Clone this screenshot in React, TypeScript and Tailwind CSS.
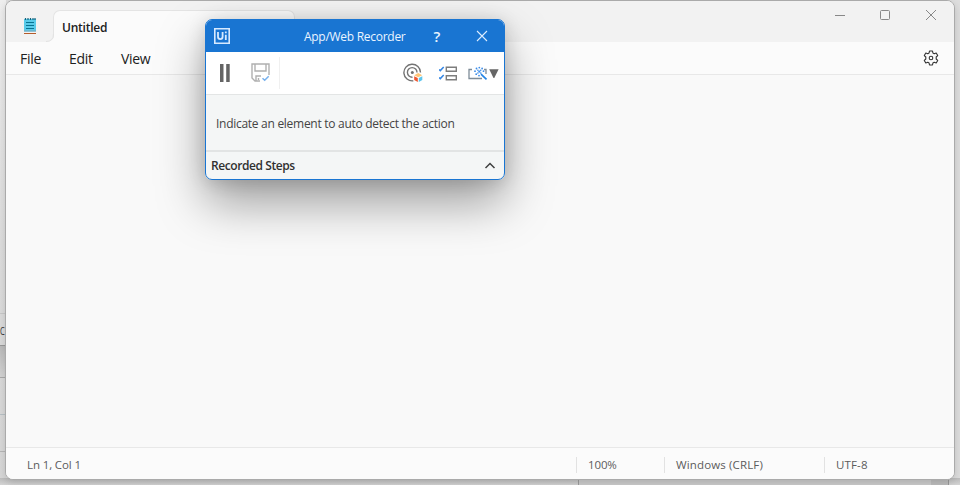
import React from "react";

function NotepadIcon() {
  return (
    <svg width="14" height="18" viewBox="0 0 14 18">
      <path d="M1 2h12v12H1z" fill="#58cbea" />
      <path d="M1 13.2h12v1.5H1z" fill="#71b2c8" />
      <path d="M1 16.5h12" stroke="#b45c2c" strokeWidth="1" />
      <path d="M2.5 1v2M5 1v2M7.5 1v2M10 1v2M12 1v2" stroke="#14647e" strokeWidth="1.2" />
      <path d="M3 5.5h8M3 8.5h8M3 11.5h8" stroke="#087493" />
    </svg>
  );
}

function GearIcon() {
  return (
    <svg width="16" height="16" viewBox="0 0 16 16" fill="none" stroke="#333" strokeWidth="1.1" strokeLinejoin="round">
      <path d="m6.5 1h3l.4 2 1.3.7 2-.7 1.5 2.6L13.2 7v2l1.5 1.4-1.5 2.6-2-.7-1.3.7-.4 2h-3l-.4-2-1.3-.7-2 .7-1.5-2.6L2.8 9V7L1.3 5.6 2.8 3l2 .7L6.1 3z" />
      <circle cx="8" cy="8" r="1.8" />
    </svg>
  );
}

function SaveIcon() {
  return (
    <svg width="19" height="20" viewBox="0 0 19 20" fill="none" stroke="#b0b0b0" strokeWidth="1.4">
      <path d="M9 18H4l-3-3V1h17v11M4 1v7h11V1M5 18v-5h5M7.5 17v-2" />
      <path d="m11.5 15.2 2.2 2 4-4" stroke="#76b0ed" strokeWidth="1.5" />
    </svg>
  );
}

function TargetIcon() {
  return (
    <svg width="20" height="20" viewBox="0 0 20 20" fill="none" stroke="#747474" strokeWidth="1.4">
      <path d="M10.3 17.8A8.3 8.3 0 1 1 17.5 9.5M9.5 14.2A4.8 4.8 0 1 1 14 9.5" />
      <circle cx="9.3" cy="9.5" r="1.5" fill="#707070" stroke="none" />
      <g stroke="none">
        <path d="m11.2 12.3 4-2.3 4 2.3-4 2z" fill="#ffc576" />
        <path d="m11.2 13.3 3.6 1.6v4l-3.6-1.9z" fill="#ee5730" />
        <path d="m19.3 13.3-3.5 1.6v4l3.5-1.9z" fill="#5cc5ee" />
      </g>
    </svg>
  );
}

function StepsIcon() {
  return (
    <svg width="18" height="15" viewBox="0 0 18 15" fill="none">
      <path d="M7.3 1.3h10v4h-10zM7.3 9.7h10v4h-10z" stroke="#7d7d7d" strokeWidth="1.4" />
      <path d="m0 3.5 1.3 1.1L4.7 1M0 11.5l1.3 1.1L4.7 9" stroke="#3486e4" strokeWidth="1.5" />
    </svg>
  );
}

function WandIcon() {
  return (
    <svg width="31" height="15" viewBox="0 0 31 15" fill="none">
      <path d="M4 3.5H1v9h13M16 3.5h2V8" stroke="#7e8c98" strokeWidth="1.3" />
      <path d="m13 8.2 5.5 5.2" stroke="#2384e5" strokeWidth="1.7" />
      <g fill="#3d8ee9">
        <circle cx="11.3" cy="1.6" r=".9" /><circle cx="8.5" cy="2.5" r=".9" />
        <circle cx="14.1" cy="2.5" r=".9" /><circle cx="7" cy="5.2" r=".9" />
        <circle cx="15.5" cy="5.2" r=".9" /><circle cx="8.2" cy="8.2" r=".9" />
        <circle cx="11" cy="9.6" r=".9" /><circle cx="11.3" cy="5.6" r="1.1" />
        <circle cx="9.9" cy="4.2" r=".8" /><circle cx="12.7" cy="4.2" r=".8" />
        <circle cx="9.9" cy="7" r=".8" /><circle cx="12.8" cy="7.1" r=".8" />
      </g>
      <path d="M21.2 3.3h9.4l-4.3 8.6h-.8z" fill="#666" />
    </svg>
  );
}

function Recorder() {
  return (
    <section className="absolute left-[205px] top-[19px] flex h-[161px] w-[300px] flex-col overflow-hidden rounded-[7px] border border-[#1975d2] bg-[#f4f6f6] text-[#444]">
      <header className="flex h-8 shrink-0 items-center bg-[#1975d2] text-[#eaf4ff]">
        <svg className="ml-2 mr-[74px] shrink-0" width="16" height="16" viewBox="0 0 16 16" fill="none" stroke="#d7eaff" strokeWidth="1.6">
          <path d="M.8.8h14.4v14.4H.8z" />
          <path d="M4 4v4.8a2.3 2.3 0 0 0 4.6 0V4M11.8 6.7V12M11.8 3.5v1.8" strokeWidth="1.8" />
        </svg>
        <h1 className="w-[102px] whitespace-nowrap pt-[2px] text-[12px] font-normal tracking-[-0.28px]">App/Web Recorder</h1>
        <span className="ml-[25px] w-3 text-center text-[15px] font-semibold">?</span>
        <svg className="ml-[33px]" width="12" height="12" viewBox="0 0 12 12" stroke="#dcecff" strokeWidth="1.1"><path d="m1 1 10 10M11 1 1 11" /></svg>
      </header>
      <div className="flex h-[43px] shrink-0 items-center border-b border-[#e3e5e5] bg-white">
        <svg className="ml-[14px] mr-[21px]" width="10" height="18" viewBox="0 0 10 18" fill="#646464"><path d="M0 0h3.5v18H0zM6.2 0h3.5v18H6.2z" /></svg>
        <SaveIcon />
        <div className="ml-[9px] h-8 border-l border-[#f0f0f0]" />
        <div className="ml-[123px]"><TargetIcon /></div>
        <div className="ml-[16px]"><StepsIcon /></div>
        <div className="ml-[11px]"><WandIcon /></div>
      </div>
      <div className="flex h-[57px] shrink-0 items-center whitespace-nowrap border-b-2 border-[#e2e4e4] pl-[10px] pt-[2px] text-[12px] tracking-[-0.28px]">Indicate an element to auto detect the action</div>
      <div className="flex grow items-center justify-between pl-[5px] pr-2">
        <strong className="text-[12px] font-semibold tracking-[-0.42px] text-[#303030]">Recorded Steps</strong>
        <svg width="12" height="8" viewBox="0 0 12 8" fill="none" stroke="#404040" strokeWidth="1.5"><path d="m1.5 6 4.5-4.5L10.5 6" /></svg>
      </div>
    </section>
  );
}

export default function App() {
  return (
    <main className="relative h-[485px] w-[960px] overflow-hidden bg-[#dedede] font-['Open_Sans','Noto_Sans',sans-serif]">
      <div className="absolute left-0 top-0 h-[485px] w-[6px] bg-linear-to-b from-[#efefef] via-[#dedede] to-[#d8d8d8]">
        <div className="h-[314px] border-b border-[#c9c9c9]" />
        <div className="h-8 border-b border-[#999] pt-[10px] text-[10px] leading-[15px] text-[#333]"><span className="block w-[7px] origin-left scale-x-75">C</span></div>
        <div className="h-8 border-b border-[#aaa] bg-linear-to-b from-[#bbb] to-[#d5d5d5]" />
        <div className="h-[37px] border-b border-[#b8c1c6]" />
        <div className="h-[37px] border-b border-[#b7b7b7]" />
      </div>
      <div className="absolute bottom-0 left-0 flex h-[7px] w-full bg-linear-to-b from-[#bebebe] to-[#d5d5d5]">
        <div className="w-[579px] border-r border-[#9d9d9d]" /><div className="w-[352px] bg-[#cdcdcd]" /><div className="w-[18px] border-r border-[#999] bg-[#bebebe]" />
      </div>
      <div className="relative ml-[5px] flex h-[480px] w-[950px] flex-col overflow-hidden rounded-[8px] border border-[#aaa] bg-[#f9f9f9] text-[#202020] shadow-[0_3px_8px_rgba(0,0,0,0.15)]">
        <header className="flex h-[41px] shrink-0 bg-[#f2f2f2]">
          <div className="flex w-[47px] items-center justify-center pl-px pt-[9px]"><NotepadIcon /></div>
          <div className="relative mt-[9px] h-8 w-[242px] rounded-t-[7px] border border-b-0 border-[#e4e4e4] bg-[#fbfbfb]">
            <svg className="absolute -left-[8px] bottom-0" width="8" height="8" viewBox="0 0 8 8" fill="none"><path d="M8 0Q8 8 0 8H8z" fill="#fbfbfb" /><path d="M7.5 0Q7.5 7.5 0 7.5" stroke="#e2e2e2" /></svg>
            <span className="block pl-[8px] pt-[8px] text-[12px] font-semibold leading-[18px] tracking-[-0.23px]">Untitled</span>
          </div>
          <div className="ml-auto flex items-start pt-[8px] text-[#888]">
            <svg className="mr-[35px]" width="10" height="12" viewBox="0 0 10 12"><path d="M0 6.5h10" stroke="currentColor" /></svg>
            <svg className="mr-[36px]" width="10" height="11" viewBox="0 0 10 11" fill="none"><rect x=".5" y="1.5" width="9" height="9" rx="1" stroke="currentColor" /></svg>
            <svg className="mr-[18px]" width="10" height="11" viewBox="0 0 10 11"><path d="m0 1 10 10M10 1 0 11" stroke="currentColor" /></svg>
          </div>
        </header>
        <nav className="flex h-[33px] shrink-0 items-center border-b border-[#e8e8e8] bg-[#fbfbfb] pl-[14px] pr-[15px] text-[14px] tracking-[-0.3px]">
          <span className="w-[49px]">File</span><span className="w-[52px]">Edit</span><span>View</span>
          <span className="ml-auto"><GearIcon /></span>
        </nav>
        <div className="grow" />
        <footer className="flex h-8 shrink-0 items-center border-t border-[#e8e8e8] bg-[#fbfbfb] pt-[2px] text-[11.5px] text-[#5c5c5c]">
          <span className="w-[570px] pl-[21px] tracking-[-0.12px]">Ln 1, Col 1</span>
          <span className="flex h-4 w-[88px] items-center border-l border-[#e2e2e2] pl-[11px] tracking-[-0.12px]">100%</span>
          <span className="flex h-4 w-[160px] items-center border-l border-[#e2e2e2] pl-[11px] tracking-[0.14px]">Windows (CRLF)</span>
          <span className="flex h-4 items-center border-l border-[#e2e2e2] pl-[11px] tracking-[0.15px]">UTF-8</span>
        </footer>
        <div className="pointer-events-none absolute left-[199px] top-[18px] h-[161px] w-[300px] rounded-[7px] shadow-[0_23px_48px_rgba(0,0,0,0.37),0_2px_18px_rgba(0,0,0,0.14)]" />
      </div>
      <Recorder />
    </main>
  );
}
